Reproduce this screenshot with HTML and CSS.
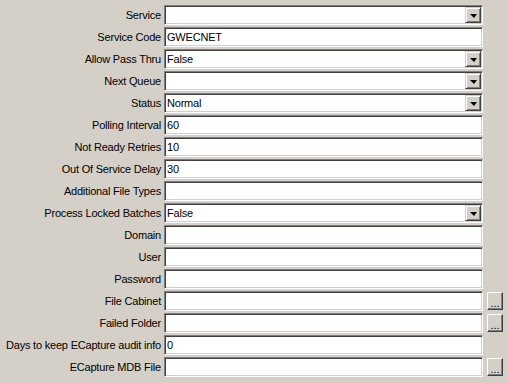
FILE: index.html
```html
<!DOCTYPE html>
<html>
<head>
  <title>Service Settings</title>
  <link rel="stylesheet" href="styles.css">
</head>
<body>
  <div class="props">
    <label class="name">Service</label>
    <div class="field combo"><span class="val"></span><span class="drop"><i></i></span></div>
    <span></span>

    <label class="name">Service Code</label>
    <div class="field"><span class="val">GWECNET</span></div>
    <span></span>

    <label class="name">Allow Pass Thru</label>
    <div class="field combo"><span class="val">False</span><span class="drop"><i></i></span></div>
    <span></span>

    <label class="name">Next Queue</label>
    <div class="field combo"><span class="val"></span><span class="drop"><i></i></span></div>
    <span></span>

    <label class="name">Status</label>
    <div class="field combo"><span class="val">Normal</span><span class="drop"><i></i></span></div>
    <span></span>

    <label class="name">Polling Interval</label>
    <div class="field"><span class="val">60</span></div>
    <span></span>

    <label class="name">Not Ready Retries</label>
    <div class="field"><span class="val">10</span></div>
    <span></span>

    <label class="name">Out Of Service Delay</label>
    <div class="field"><span class="val">30</span></div>
    <span></span>

    <label class="name">Additional File Types</label>
    <div class="field"><span class="val"></span></div>
    <span></span>

    <label class="name">Process Locked Batches</label>
    <div class="field combo"><span class="val">False</span><span class="drop"><i></i></span></div>
    <span></span>

    <label class="name">Domain</label>
    <div class="field"><span class="val"></span></div>
    <span></span>

    <label class="name">User</label>
    <div class="field"><span class="val"></span></div>
    <span></span>

    <label class="name">Password</label>
    <div class="field"><span class="val"></span></div>
    <span></span>

    <label class="name">File Cabinet</label>
    <div class="field"><span class="val"></span></div>
    <button class="browse">...</button>

    <label class="name">Failed Folder</label>
    <div class="field"><span class="val"></span></div>
    <button class="browse">...</button>

    <label class="name">Days to keep ECapture audit info</label>
    <div class="field"><span class="val">0</span></div>
    <span></span>

    <label class="name">ECapture MDB File</label>
    <div class="field"><span class="val"></span></div>
    <button class="browse">...</button>
  </div>
</body>
</html>
```

FILE: styles.css
```css
body {
  margin: 0;
  background-color: #d4d0c8;
  font-family: "Liberation Sans", Arial, sans-serif;
  font-size: 11px;
  letter-spacing: -0.2px;
  color: #000;
}

.props {
  display: grid;
  grid-template-columns: 161px 319px 16px;
  grid-auto-rows: 20px;
  column-gap: 3px;
  row-gap: 2px;
  padding-top: 5px;
}

.props > span:empty {
  display: block;
}

.name {
  display: flex;
  align-items: center;
  justify-content: flex-end;
  white-space: nowrap;
}

.field {
  display: flex;
  align-items: center;
  box-sizing: border-box;
  background-color: #fff;
  border-style: solid;
  border-width: 1px;
  border-color: #808080 #fff #fff #808080;
  box-shadow: inset 1px 1px 0 #404040, inset -1px -1px 0 #d4d0c8;
  padding: 1px;
}

.val {
  flex: 1;
  padding-left: 1px;
  white-space: nowrap;
}

.drop {
  width: 16px;
  height: 16px;
  box-sizing: border-box;
  background-color: #d4d0c8;
  border-style: solid;
  border-width: 1px;
  border-color: #d4d0c8 #404040 #404040 #d4d0c8;
  box-shadow: inset 1px 1px 0 #fff, inset -1px -1px 0 #808080;
  display: flex;
  align-items: center;
  justify-content: center;
}

.drop i {
  width: 0;
  height: 0;
  border-left: 4px solid transparent;
  border-right: 3px solid transparent;
  border-top: 4px solid #000;
  margin-top: 1px;
}

.browse {
  margin: 1px 0 1px 1px;
  width: 16px;
  height: 18px;
  padding: 4px 0 0;
  box-sizing: border-box;
  background-color: #d4d0c8;
  border-style: solid;
  border-width: 1px;
  border-color: #fff #404040 #404040 #fff;
  box-shadow: inset -1px -1px 0 #808080;
  font-family: "Liberation Sans", Arial, sans-serif;
  font-size: 11px;
  line-height: 10px;
  color: #000;
}
```
